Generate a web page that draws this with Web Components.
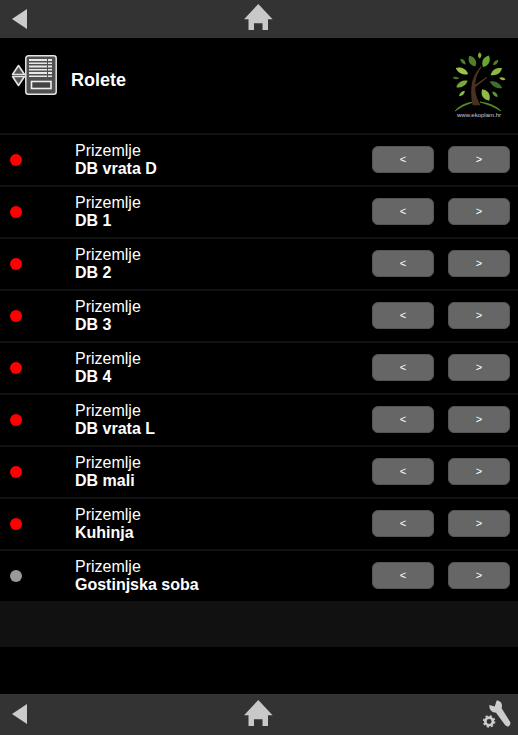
<!DOCTYPE html>
<html>
<head>
<meta charset="utf-8">
<title>Rolete</title>
<style>
  html, body { margin: 0; height: 100%; background: #000; }
  body { font-family: "Liberation Sans", Arial, sans-serif; color: #fff; overflow: hidden; }
  #page { display: flex; flex-direction: column; height: 735px; }
  blind-list { flex: 1; }
</style>
</head>
<body>
<div id="page">
  <app-bar></app-bar>
  <page-header title-text="Rolete"></page-header>
  <blind-list>
    <blind-row floor="Prizemlje" name="DB vrata D" state="on"></blind-row>
    <blind-row floor="Prizemlje" name="DB 1" state="on"></blind-row>
    <blind-row floor="Prizemlje" name="DB 2" state="on"></blind-row>
    <blind-row floor="Prizemlje" name="DB 3" state="on"></blind-row>
    <blind-row floor="Prizemlje" name="DB 4" state="on"></blind-row>
    <blind-row floor="Prizemlje" name="DB vrata L" state="on"></blind-row>
    <blind-row floor="Prizemlje" name="DB mali" state="on"></blind-row>
    <blind-row floor="Prizemlje" name="Kuhinja" state="on"></blind-row>
    <blind-row floor="Prizemlje" name="Gostinjska soba" state="off"></blind-row>
  </blind-list>
  <app-bar tools></app-bar>
</div>

<script>
const BACK_ICON = `<svg class="back" width="15" height="20" viewBox="0 0 15 20"><path d="M15 0 L15 20 L0 10 Z" fill="#ccc"/></svg>`;
const HOME_ICON = `<svg class="home" width="29" height="26" viewBox="0 0 29 26"><path d="M14.300 0 L28.600 15.300 L24 15.300 L24 26 L18.500 26 L18.500 19.300 L10 19.300 L10 26 L4.500 26 L4.500 15.300 L0 15.300 Z" fill="#c8c8c8"/></svg>`;
// drawn in the coordinates of a 3x crop, hence the viewBox
const TOOLS_ICON = `<svg class="tools" width="40" height="33" viewBox="60 30 120 100">
  <path d="M94 60 L110 65 L116 47 C128 47 135 58 131 70 L157 112 C160 122 150 130 142 122 L114 84 C102 84 92 74 94 60 Z" fill="#ccc"/>
  <circle cx="93" cy="110" r="11.500" fill="none" stroke="#ccc" stroke-width="8"/>
  <circle cx="93" cy="110" r="16.500" fill="none" stroke="#ccc" stroke-width="5" stroke-dasharray="6.500 6.450"/>
</svg>`;

// cx, cy, length, width, angle, colour, in the coordinates of a 3x crop of the logo
const LEAVES = [
  [127, 63, 37, 19, -30, '#4f7f2a'],
  [168, 64, 39, 19, 27, '#6ba53a'],
  [149, 46, 19, 10, 0, '#7fae3c'],
  [99, 65, 23, 9, -42, '#4f7f2a'],
  [197, 68, 22, 9, 45, '#4f7f2a'],
  [96, 93, 41, 16, -65, '#9cc24a'],
  [199, 95, 40, 16, 60, '#8db845'],
  [78, 114, 21, 7, -80, '#4a6d25'],
  [217, 116, 20, 8, -75, '#8db845'],
  [96, 132, 39, 15, 61, '#79a83a'],
  [198, 134, 42, 14, -62, '#3f7030'],
  [96, 161, 23, 9, 48, '#8db845'],
  [195, 163, 23, 9, -45, '#5e9636'],
  [167, 165, 40, 20, -32, '#8fbc45']
];

function leafMarkup([cx, cy, len, w, angle, colour]) {
  const h = len / 2, b = w * 0.7;
  return `<path transform="translate(${cx} ${cy}) rotate(${angle})" d="M0 ${-h} C${b} ${-h * 0.4} ${b} ${h * 0.4} 0 ${h} C${-b} ${h * 0.4} ${-b} ${-h * 0.4} 0 ${-h} Z" fill="${colour}"/>`;
}

class AppBar extends HTMLElement {
  connectedCallback() {
    const tools = this.hasAttribute('tools');
    this.attachShadow({ mode: 'open' });
    this.shadowRoot.innerHTML = `
      <style>
        :host { display: grid; grid-template-columns: 232px 29px 1fr; align-items: center; height: 38px; padding-left: 12px; background: #333; }
        :host([tools]) { height: 41px; }
        div { display: flex; align-items: center; }
        svg { display: block; }
        .end { justify-content: flex-end; }
        .back { margin-bottom: ${tools ? 2 : 0}px; }
        .home { margin-bottom: ${tools ? 3 : 4}px; }
        .tools { margin-bottom: 6px; }
      </style>
      <div>${BACK_ICON}</div>
      <div>${HOME_ICON}</div>
      <div class="end">${tools ? TOOLS_ICON : ''}</div>
    `;
  }
}

class PageHeader extends HTMLElement {
  connectedCallback() {
    this.attachShadow({ mode: 'open' });
    this.shadowRoot.innerHTML = `
      <style>
        :host { display: flex; align-items: flex-start; height: 95px; padding-left: 11px; }
        .icon { margin-top: 16px; display: block; }
        h1 { margin: 32px 0 0 13px; font-size: 18px; line-height: 21px; font-weight: bold; flex: 1; }
        .logo { margin-top: 2px; display: block; }
      </style>
      <svg class="icon" width="47" height="42" viewBox="0 0 47 42">
        <path d="M1.500 20.500 L7.500 11.500 L13.500 20.500 Z M1.500 22.500 L7.500 31.500 L13.500 22.500 Z" fill="#555" stroke="#e4e4e4" stroke-width="1.600" stroke-linejoin="round"/>
        <rect x="14.800" y="1.800" width="30.400" height="38.400" rx="2.500" fill="#505050" stroke="#e4e4e4" stroke-width="1.500"/>
        <g fill="#e8e8e8">
          <path d="M18 5 h18 v2 h-18 Z M37 5 h4 v2 h-4 Z"/>
          <path d="M18 8.500 h18 v1.500 h-18 Z M37 8.500 h4 v1.500 h-4 Z"/>
          <path d="M18 11.500 h18 v2 h-18 Z M37 11.500 h4 v2 h-4 Z"/>
          <path d="M18 15 h18 v1.500 h-18 Z M37 15 h4 v1.500 h-4 Z"/>
          <path d="M18 18 h18 v2 h-18 Z M37 18 h4 v2 h-4 Z"/>
          <path d="M18 21.500 h18 v1.500 h-18 Z M37 21.500 h4 v1.500 h-4 Z"/>
        </g>
        <rect x="20.500" y="27.500" width="19.500" height="7" fill="#444" stroke="#eee" stroke-width="1.600"/>
      </svg>
      <h1>${this.getAttribute('title-text')}</h1>
      <svg class="logo" width="88" height="90" viewBox="0 0 264 270" font-family="Liberation Sans">
        <path d="M75 213 Q95 190 130 186 Q100 195 75 213 Z M150 186 Q190 190 213 213 Q185 195 150 186 Z" fill="#5d9a2e" stroke="#5d9a2e" stroke-width="2"/>
        <path d="M128 196 C122 170 122 140 128 120 C134 103 143 90 153 78 L156 80 C147 93 139 107 137 122 L135 134 L170 110 L172 113 L136 142 C135 160 142 180 152 196 Z" fill="#4a3020"/>
        ${LEAVES.map(leafMarkup).join('')}
        <text x="147" y="231" text-anchor="middle" font-size="18" fill="#ccd">www.ekoplam.hr</text>
      </svg>
    `;
  }
}

class BlindList extends HTMLElement {
  connectedCallback() {
    this.attachShadow({ mode: 'open' });
    this.shadowRoot.innerHTML = `
      <style>
        :host { display: block; }
        .filler { height: 46px; background: #111; }
      </style>
      <slot></slot>
      <div class="filler"></div>
    `;
  }
}

class BlindRow extends HTMLElement {
  connectedCallback() {
    const on = this.getAttribute('state') === 'on';
    this.attachShadow({ mode: 'open' });
    this.shadowRoot.innerHTML = `
      <style>
        :host { display: flex; align-items: center; height: 50px; padding-right: 8px; border-top: 2px solid #111; }
        .dot { width: 12px; height: 12px; margin-left: 10px; border-radius: 50%; background: ${on ? '#f00' : '#999'}; }
        .label { flex: 1; margin-left: 53px; font-size: 16px; line-height: 18px; }
        .name { font-weight: bold; }
        button { width: 62px; height: 27px; margin: 0 0 2px 14px; padding: 0; border: 1px solid #555; border-radius: 6px; background: #666; color: #fff; font: 11px "Liberation Sans", Arial, sans-serif; }
      </style>
      <div class="dot"></div>
      <div class="label">
        <div>${this.getAttribute('floor')}</div>
        <div class="name">${this.getAttribute('name')}</div>
      </div>
      <button type="button">&lt;</button>
      <button type="button">&gt;</button>
    `;
  }
}

window.customElements.define('app-bar', AppBar);
window.customElements.define('page-header', PageHeader);
window.customElements.define('blind-list', BlindList);
window.customElements.define('blind-row', BlindRow);
</script>
</body>
</html>
